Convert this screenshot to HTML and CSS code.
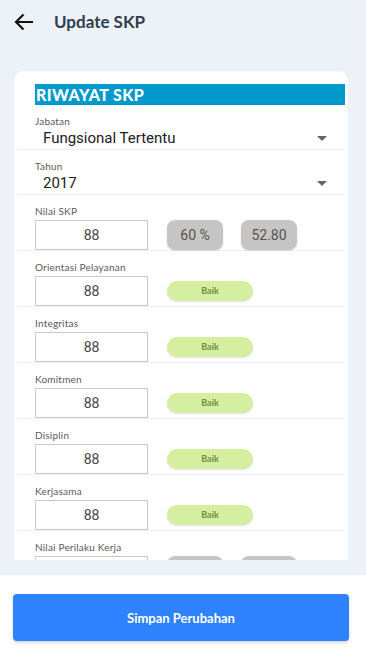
FILE: index.html
```html
<!DOCTYPE html>
<html lang="en">
<head>
    <meta charset="UTF-8">
    <meta name="viewport" content="width=device-width, initial-scale=1.0">
    <title>Update SKP</title>
    <link rel="stylesheet" href="styles.css">
</head>
<body>

<div class="app">
    <div class="header">
        <svg class="back" width="20" height="18" viewBox="0 0 20 18">
            <path d="M19 9H2M9.5 1.5L2 9l7.5 7.5" fill="none" stroke="#111" stroke-width="2.2"/>
        </svg>
        <h1>Update SKP</h1>
    </div>

    <div class="scroll">
        <div class="card">
            <div class="banner">RIWAYAT SKP</div>

            <div class="field">
                <div class="label">Jabatan</div>
                <div class="select">
                    <span>Fungsional Tertentu</span>
                    <span class="caret"></span>
                </div>
            </div>

            <div class="field">
                <div class="label">Tahun</div>
                <div class="select">
                    <span>2017</span>
                    <span class="caret"></span>
                </div>
            </div>

            <div class="field">
                <div class="label">Nilai SKP</div>
                <div class="row">
                    <div class="input">88</div>
                    <div class="chip">60 %</div>
                    <div class="chip">52.80</div>
                </div>
            </div>

            <div class="field">
                <div class="label">Orientasi Pelayanan</div>
                <div class="row">
                    <div class="input">88</div>
                    <div class="grade">Baik</div>
                </div>
            </div>

            <div class="field">
                <div class="label">Integritas</div>
                <div class="row">
                    <div class="input">88</div>
                    <div class="grade">Baik</div>
                </div>
            </div>

            <div class="field">
                <div class="label">Komitmen</div>
                <div class="row">
                    <div class="input">88</div>
                    <div class="grade">Baik</div>
                </div>
            </div>

            <div class="field">
                <div class="label">Disiplin</div>
                <div class="row">
                    <div class="input">88</div>
                    <div class="grade">Baik</div>
                </div>
            </div>

            <div class="field">
                <div class="label">Kerjasama</div>
                <div class="row">
                    <div class="input">88</div>
                    <div class="grade">Baik</div>
                </div>
            </div>

            <!-- last row is scrolled below the fold -->
            <div class="field">
                <div class="label">Nilai Perilaku Kerja</div>
                <div class="row">
                    <div class="input"></div>
                    <div class="chip"></div>
                    <div class="chip"></div>
                </div>
            </div>
        </div>
    </div>

    <div class="footer">
        <button type="button">Simpan Perubahan</button>
    </div>
</div>

</body>
</html>
```

FILE: styles.css
```css
body {
    margin: 0;
    padding: 0;
    background-color: #edf1f8;
    font-family: Roboto, "Liberation Sans", sans-serif;
}
.app {
    display: flex;
    flex-direction: column;
    height: 650px;
}
.header {
    height: 71px;
    display: flex;
    align-items: flex-start;
    padding: 13px 0 0 14px;
    box-sizing: border-box;
}
.back {
    display: block;
}
.header h1 {
    margin: 0 0 0 20px;
    font-family: Lato, sans-serif;
    font-size: 17px;
    font-weight: 700;
    color: #2e3e4e;
    line-height: 18px;
}
.scroll {
    height: 489px;
    margin: 0 18px 0 14px;
    overflow: hidden;
}
.card {
    background-color: #fff;
    border-radius: 10px 10px 0 0;
    padding: 13px 3px 0 3px;
}
.banner {
    margin-left: 18px;
    height: 21px;
    line-height: 22px;
    background-color: #0099cc;
    color: #fff;
    font-family: Lato, sans-serif;
    font-weight: 900;
    font-size: 16px;
    letter-spacing: 0.4px;
    padding-left: 1px;
}
.field {
    padding: 10px 0 0 18px;
    border-bottom: 1px solid #f0f0f0;
}
.label {
    font-family: Lato, sans-serif;
    font-size: 10px;
    line-height: 12px;
    color: #5a5a5a;
    letter-spacing: 0.2px;
}
.select {
    display: flex;
    justify-content: space-between;
    align-items: center;
    height: 22px;
    padding: 0 18px 0 8px;
    font-size: 15px;
    color: #212121;
}
.caret {
    width: 0;
    height: 0;
    border-left: 5px solid transparent;
    border-right: 5px solid transparent;
    border-top: 5px solid #666;
}
.row {
    display: flex;
    align-items: center;
    margin-top: 3px;
    gap: 18px;
}
.input {
    width: 111px;
    height: 28px;
    border: 1px solid #c9c9c9;
    text-align: center;
    line-height: 28px;
    font-size: 14px;
    color: #444;
    margin-right: 1px;
}
.chip {
    width: 56px;
    height: 30px;
    line-height: 30px;
    border-radius: 8px;
    background-color: #c6c5c3;
    text-align: center;
    font-size: 14px;
    color: #555;
    box-shadow: 0 1px 2px rgba(0, 0, 0, 0.12);
}
.grade {
    width: 86px;
    height: 20px;
    line-height: 20px;
    border-radius: 10px;
    background-color: #d5efa1;
    text-align: center;
    font-family: Lato, sans-serif;
    font-size: 9px;
    font-weight: 700;
    color: #6e8f3c;
    box-shadow: 0 1px 2px rgba(0, 0, 0, 0.12);
}
.footer {
    margin-top: 15px;
    flex: 1;
    background-color: #fff;
    padding: 19px 17px 0 13px;
}
.footer button {
    width: 100%;
    height: 47px;
    border: none;
    border-radius: 4px;
    background-color: #2f82fd;
    color: #fff;
    font-family: Lato, sans-serif;
    font-weight: 700;
    font-size: 13px;
    box-shadow: 0 2px 3px rgba(0, 0, 0, 0.15);
}
```
